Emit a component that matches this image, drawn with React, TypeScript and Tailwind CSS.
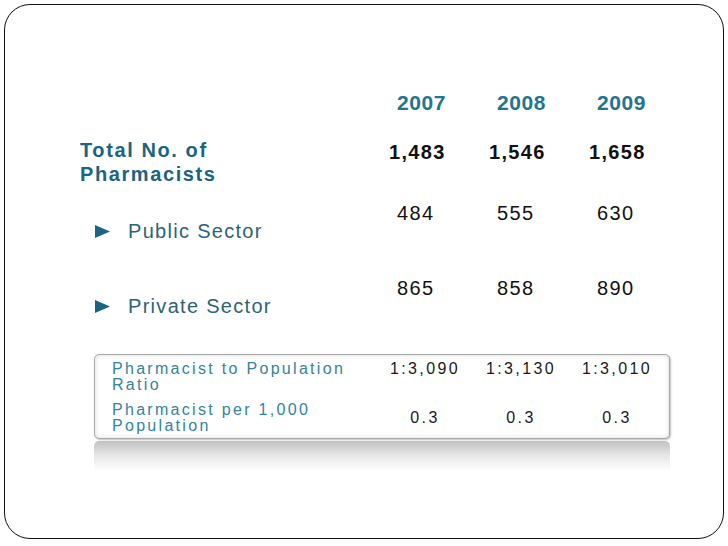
export default function App() {
  const years = ['2007', '2008', '2009'];
  const totals = ['1,483', '1,546', '1,658'];
  const sectors = [
    { label: 'Public Sector', values: ['484', '555', '630'], mt: 'mt-[15px]' },
    { label: 'Private Sector', values: ['865', '858', '890'], mt: 'mt-[33px]' },
  ];

  return (
    <div className="w-[728px] h-[546px] bg-white pt-[4px] pl-[4px] font-['Liberation_Sans',Arial,sans-serif]">
      <div className="w-[720px] h-[535px] border-[1.5px] border-[#111] rounded-[26px] pl-[75px]">
        {/* year header */}
        <div className="grid grid-cols-[293px_100px_100px_100px] mt-[86px] h-[24px] text-[21px] leading-[24px] font-bold text-[#22748f] tracking-[0.6px]">
          <div />
          {years.map((y) => (
            <div key={y} className="pl-[24px]">{y}</div>
          ))}
        </div>

        {/* total */}
        <div className="grid grid-cols-[293px_100px_100px_100px] mt-[23px]">
          <div className="text-[20px] leading-[24px] font-bold text-[#1b6580] tracking-[1.6px]">
            Total No. of
            <br />
            Pharmacists
          </div>
          {totals.map((v) => (
            <div key={v} className="pl-[16px] pt-[2px] text-[20px] leading-[24px] font-bold text-[#111] tracking-[1.3px]">
              {v}
            </div>
          ))}
        </div>

        {/* sectors */}
        {sectors.map((s) => (
          <div key={s.label} className={`grid grid-cols-[293px_100px_100px_100px] ${s.mt}`}>
            <div className="pt-[18px] pl-[15px] flex items-center gap-[18px] h-[42px]">
              <svg width="15" height="13" viewBox="0 0 15 13" className="shrink-0 mt-[1px]">
                <polygon points="0,0 15,6.5 0,13" fill="#1b6580" />
              </svg>
              <span className="text-[20px] leading-[24px] text-[#2b6478] tracking-[1.3px]">{s.label}</span>
            </div>
            {s.values.map((v) => (
              <div key={v} className="pl-[24px] text-[20px] leading-[24px] text-[#111] tracking-[1.4px]">
                {v}
              </div>
            ))}
          </div>
        ))}

        {/* ratio table */}
        <div className="ml-[14px] mt-[36px] w-[576px]">
          <div className="h-[85px] bg-white border border-[#a8a8a8] rounded-[5px] shadow-[inset_0_0_5px_rgba(0,0,0,0.15),1px_1px_2px_rgba(0,0,0,0.25)] pt-[6px] pl-[17px] text-[16px] leading-[16px] tracking-[2.3px]">
            <div className="grid grid-cols-[265px_96px_96px_96px]">
              <div className="text-[#33849c]">
                Pharmacist to Population
                <br />
                Ratio
              </div>
              {['1:3,090', '1:3,130', '1:3,010'].map((v) => (
                <div key={v} className="text-center text-[#1a1a1a] tracking-[2.4px]">{v}</div>
              ))}
            </div>
            <div className="grid grid-cols-[265px_96px_96px_96px] mt-[9px] items-center">
              <div className="text-[#33849c]">
                Pharmacist per 1,000
                <br />
                Population
              </div>
              {['0.3', '0.3', '0.3'].map((v, i) => (
                <div key={i} className="text-center text-[#1a1a1a] tracking-[2.4px]">{v}</div>
              ))}
            </div>
          </div>
          {/* reflection */}
          <div className="mt-[2px] h-[30px] rounded-t-[5px] bg-gradient-to-b from-[#c2c2c2] via-[#e8e8e8] to-white" />
        </div>
      </div>
    </div>
  );
}
